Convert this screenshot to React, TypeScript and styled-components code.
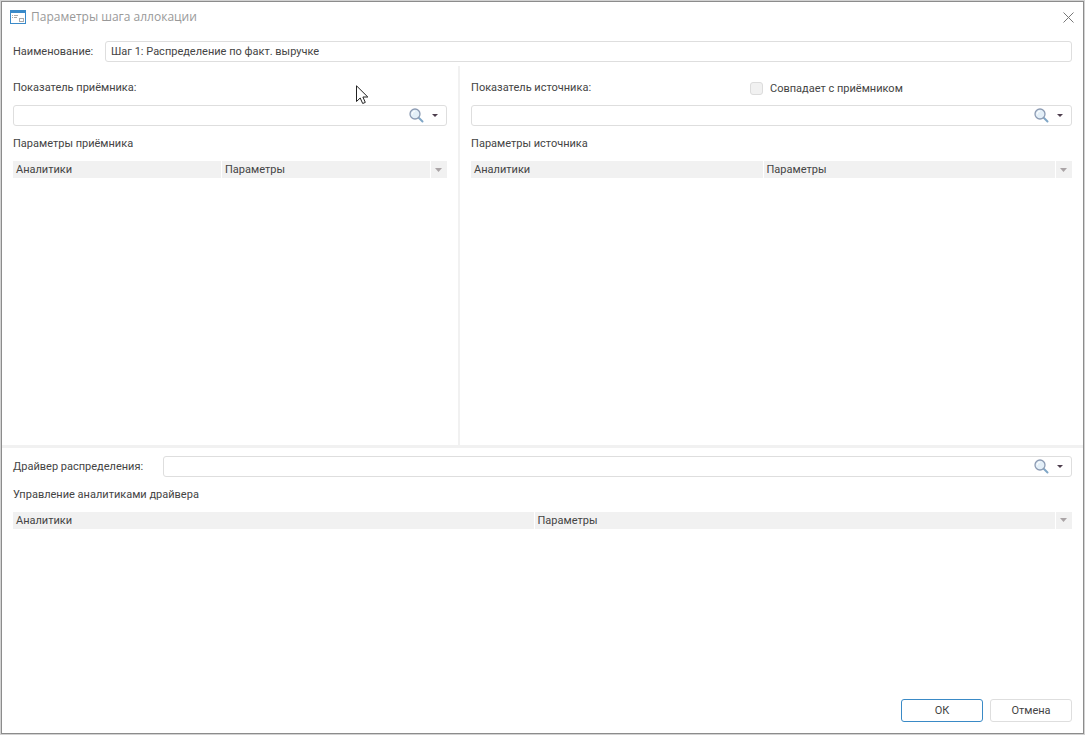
import React, { useId } from "react";
import styled, { createGlobalStyle } from "styled-components";

const Global = createGlobalStyle`
  * { box-sizing: border-box; }
  body {
    margin: 0;
    background: #d2d2d2;
    font-family: Roboto, "Liberation Sans", sans-serif;
    font-size: 11px;
    line-height: 16px;
    color: #444;
  }
  button, input { font: inherit; color: inherit; }
`;

const Page = styled.div`
  min-height: 100vh;
  padding: 1px;
  display: flex;
`;

const Dialog = styled.main`
  flex: 1;
  min-width: 0;
  display: grid;
  grid-template-rows: 30px 34px 134fr 100fr;
  background: #fff;
  border: 1px solid #8c8c8c;
`;

const TitleBar = styled.header`
  display: flex;
  align-items: center;
  gap: 5px;
  padding: 0 9px 0 8px;
`;

const Title = styled.h1`
  flex: 1;
  margin: 0;
  font: 400 12px/16px "Open Sans", "Noto Sans", sans-serif;
  color: #999;
`;

const CloseButton = styled.button`
  display: flex;
  padding: 0;
  border: 0;
  background: none;
`;

const FieldRow = styled.div<{ $labelWidth: number }>`
  display: grid;
  grid-template-columns: ${(p) => p.$labelWidth}px 1fr;
  align-items: center;
`;

const NameRow = styled(FieldRow)`
  padding: 4px 11px 0;
  align-self: center;
`;

const Label = styled.label`
  padding-top: 1px;
  white-space: nowrap;
`;

const Box = styled.div`
  display: flex;
  align-items: center;
  height: 21px;
  border: 1px solid #dedede;
  border-radius: 3px;
  background: #fff;
`;

const TextInput = styled.input`
  flex: 1;
  min-width: 0;
  height: 19px;
  padding: 0 5px;
  border: 0;
  outline: 0;
  background: none;
`;

const IconButton = styled.button`
  display: flex;
  align-items: center;
  justify-content: center;
  width: 22px;
  height: 19px;
  padding: 0;
  border: 0;
  background: none;
`;

const SearchButton = styled(IconButton)`
  width: 16px;
`;

const Panes = styled.div`
  display: grid;
  grid-template-columns: 25fr 34fr;
  border-bottom: 3px solid #f1f1f1;
`;

const Pane = styled.section`
  min-width: 0;
  padding: 13px 11px 0;
  &:first-child { border-right: 2px solid #f1f1f1; }
`;

const LabelRow = styled.div`
  display: grid;
  grid-template-columns: 279fr 322fr;
  height: 16px;
  margin-bottom: 10px;
`;

const CheckLabel = styled.label`
  display: flex;
  align-items: center;
  gap: 7px;
  height: 18px;
  white-space: nowrap;
`;

const CheckText = styled.span`
  padding-top: 2px;
`;

const Check = styled.input`
  appearance: none;
  width: 13px;
  height: 13px;
  margin: 0;
  border: 1px solid #dcdcdc;
  border-radius: 3px;
  background: #f1f1f1;
`;

const Heading = styled.h2`
  margin: 10px 0 9px;
  font-size: 11px;
  line-height: 16px;
  font-weight: 400;
`;

const Table = styled.table`
  width: 100%;
  table-layout: fixed;
  border-collapse: collapse;
`;

const Th = styled.th`
  height: 17px;
  padding: 0 3px;
  background: #f1f1f1;
  background-clip: padding-box;
  border-right: 1px solid #fff;
  text-align: left;
  font-weight: 400;
  line-height: 17px;
`;

const MenuTh = styled(Th)`
  width: 17px;
  padding: 0;
  border-right: 0;
`;

const MenuButton = styled(IconButton)`
  width: 16px;
  height: 17px;
`;

const Bottom = styled.section`
  display: flex;
  flex-direction: column;
  padding: 8px 11px 11px;
`;

const Footer = styled.footer`
  display: flex;
  justify-content: flex-end;
  gap: 7px;
  margin-top: auto;
`;

const Button = styled.button<{ $primary?: boolean }>`
  width: 82px;
  height: 23px;
  padding: 0;
  border: 1px solid ${(p) => (p.$primary ? "#3a8ac6" : "#dedede")};
  border-radius: 3px;
  background: #fff;
`;

const Cursor = styled.svg`
  position: absolute;
  left: 356px;
  top: 85px;
  pointer-events: none;
`;

function WindowIcon() {
  return (
    <svg width="16" height="14" viewBox="0 0 16 14" shapeRendering="crispEdges" aria-hidden="true">
      <path d="M0 0H16V14H0Z" fill="#3a8ac9" />
      <path d="M1 3H15V13H1Z" fill="#fff" />
      <path d="M2 5H3V6H2ZM4 5H8V6H4ZM2 7H3V8H2ZM4 7H7V8H4Z" fill="#aaa" />
      <path d="M9.5 8.500H13.500V11.500H9.500Z" fill="none" stroke="#aaa" />
    </svg>
  );
}

function CloseIcon() {
  return (
    <svg width="11" height="11" viewBox="0 0 11 11" aria-hidden="true">
      <path d="M.5 .5L10.500 10.500M10.500 .5L.5 10.500" stroke="#777" fill="none" />
    </svg>
  );
}

function SearchIcon() {
  return (
    <svg width="15" height="15" viewBox="0 0 15 15" aria-hidden="true">
      <path d="M10 10L13.500 13.500" stroke="#7fa6c6" strokeWidth="2" strokeLinecap="round" />
      <circle cx="6" cy="6" r="5" fill="#e3eff8" stroke="#8c9bb3" strokeWidth="1.300" />
      <path d="M3 6.500Q3 3.500 6 3" fill="none" stroke="#fff" />
    </svg>
  );
}

function Arrow({ wide }: { wide?: boolean }) {
  return wide ? (
    <svg width="7" height="4" viewBox="0 0 7 4" aria-hidden="true">
      <path d="M0 0H7L3.500 4Z" fill="#aaa4a6" />
    </svg>
  ) : (
    <svg width="6" height="3" viewBox="0 0 6 3" aria-hidden="true">
      <path d="M0 0H6L3 3Z" fill="#4d3d4d" />
    </svg>
  );
}

function LookupBox({ id }: { id: string }) {
  return (
    <Box>
      <TextInput id={id} type="text" />
      <SearchButton type="button" aria-label="Поиск"><SearchIcon /></SearchButton>
      <IconButton type="button" aria-label="Открыть список"><Arrow /></IconButton>
    </Box>
  );
}

function ParamTable() {
  return (
    <Table>
      <thead>
        <tr>
          <Th scope="col">Аналитики</Th>
          <Th scope="col">Параметры</Th>
          <MenuTh>
            <MenuButton type="button" aria-label="Меню столбцов"><Arrow wide /></MenuButton>
          </MenuTh>
        </tr>
      </thead>
    </Table>
  );
}

export default function App() {
  const id = useId();
  return (
    <>
      <Global />
      <Page>
        <Dialog>
          <TitleBar>
            <WindowIcon />
            <Title>Параметры шага аллокации</Title>
            <CloseButton type="button" aria-label="Закрыть"><CloseIcon /></CloseButton>
          </TitleBar>
          <NameRow $labelWidth={92}>
            <Label htmlFor={id + "name"}>Наименование:</Label>
            <Box>
              <TextInput id={id + "name"} type="text" defaultValue="Шаг 1: Распределение по факт. выручке" />
            </Box>
          </NameRow>
          <Panes>
            <Pane>
              <LabelRow>
                <Label htmlFor={id + "target"}>Показатель приёмника:</Label>
              </LabelRow>
              <LookupBox id={id + "target"} />
              <Heading>Параметры приёмника</Heading>
              <ParamTable />
            </Pane>
            <Pane>
              <LabelRow>
                <Label htmlFor={id + "source"}>Показатель источника:</Label>
                <CheckLabel>
                  <Check type="checkbox" />
                  <CheckText>Совпадает с приёмником</CheckText>
                </CheckLabel>
              </LabelRow>
              <LookupBox id={id + "source"} />
              <Heading>Параметры источника</Heading>
              <ParamTable />
            </Pane>
          </Panes>
          <Bottom>
            <FieldRow $labelWidth={150}>
              <Label htmlFor={id + "driver"}>Драйвер распределения:</Label>
              <LookupBox id={id + "driver"} />
            </FieldRow>
            <Heading>Управление аналитиками драйвера</Heading>
            <ParamTable />
            <Footer>
              <Button type="button" $primary>ОК</Button>
              <Button type="button">Отмена</Button>
            </Footer>
          </Bottom>
        </Dialog>
      </Page>
      <Cursor width="13" height="20" viewBox="0 0 13 20" aria-hidden="true">
        <path d="M.5 .8V16.500L4.200 13L6.700 18.500L9.300 17.400L6.900 12H11.800Z" fill="#fff" stroke="#222" />
      </Cursor>
    </>
  );
}
